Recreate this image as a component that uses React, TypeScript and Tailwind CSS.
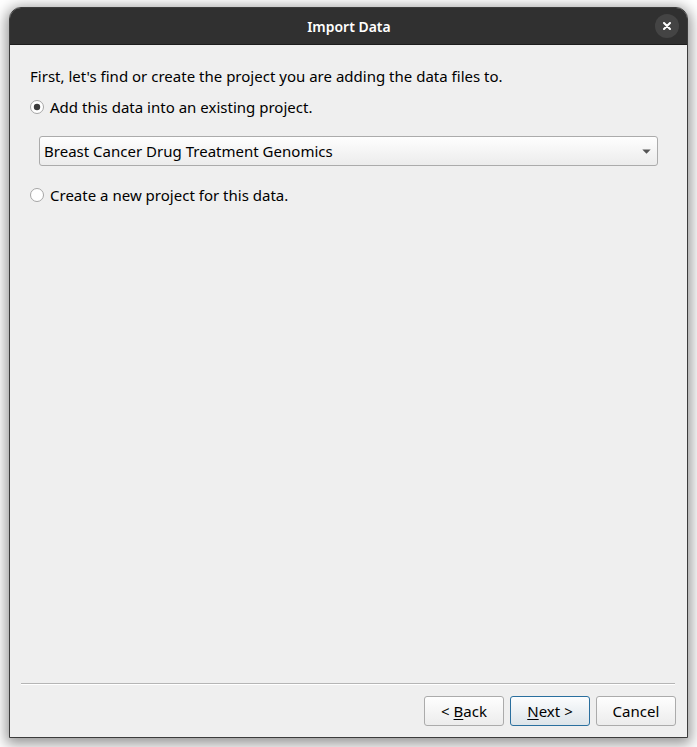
import type { ReactNode } from "react";

function Radio({ checked, children }: { checked?: boolean; children: ReactNode }) {
  return (
    <label className="flex h-[22px] items-start">
      <svg className="mr-[6px] mt-1 shrink-0" width="14" height="14" viewBox="0 0 14 14">
        <circle cx="7" cy="7" r="6.5" fill="#fff" stroke="#a5a5a5" />
        {checked && <circle cx="7" cy="7" r="3.2" fill="#3c3c3c" />}
      </svg>
      <span className="whitespace-nowrap leading-[22px]">{children}</span>
    </label>
  );
}

function Button({ primary, children }: { primary?: boolean; children: ReactNode }) {
  const look = primary
    ? "border-[#2a6f9e] from-[#fcfdfe] to-[#dce4e9]"
    : "border-[#ababab] from-[#fefefe] to-[#ececec]";
  return (
    <button
      className={`flex h-[30px] w-20 items-center justify-center whitespace-pre rounded-[3px] border bg-linear-to-b leading-none ${look}`}
    >
      {children}
    </button>
  );
}

function Mnemonic({ children }: { children: ReactNode }) {
  return <span className="underline decoration-1 underline-offset-2">{children}</span>;
}

export default function App() {
  return (
    <div className="h-[747px] w-[697px] overflow-hidden bg-white pl-[9px] pt-[7px] font-['Noto_Sans',sans-serif] text-[15px] tracking-[0.01px] text-black">
      <div className="flex h-[731px] w-[679px] flex-col overflow-hidden rounded-t-[12px] border border-[#3c3c3c] bg-[#efefef] shadow-[0_3px_14px_3px_rgba(0,0,0,0.42)]">
        <header className="grid h-[37px] shrink-0 grid-cols-[1fr_auto_1fr] items-center border-b border-[#1d1d1d] bg-[#303030]">
          <span />
          <h1 className="scale-x-[0.93] text-[15px] font-semibold text-white">Import Data</h1>
          <button className="mr-2 flex size-6 items-center justify-center justify-self-end rounded-full bg-[#444444]">
            <svg width="8" height="8" viewBox="0 0 8 8" stroke="#fff" strokeWidth="2" strokeLinecap="round">
              <path d="M1 1 7 7M7 1 1 7" />
            </svg>
          </button>
        </header>
        <main className="flex grow flex-col pl-5 pt-5">
          <p className="h-[22px] whitespace-nowrap leading-[22px]">
            First, let's find or create the project you are adding the data files to.
          </p>
          <div className="mt-[9px]">
            <Radio checked>Add this data into an existing project.</Radio>
          </div>
          <div className="ml-[9px] mt-[18px] flex h-[30px] w-[619px] items-center justify-between rounded-[3px] border border-[#ababab] bg-linear-to-b from-[#fefefe] to-[#ececec] pl-1 pr-[6px]">
            <span>Breast Cancer Drug Treatment Genomics</span>
            <svg width="9" height="5" viewBox="0 0 9 5" fill="#555">
              <path d="M.3.4h8.4L4.5 4.8Z" />
            </svg>
          </div>
          <div className="mt-[18px]">
            <Radio>Create a new project for this data.</Radio>
          </div>
        </main>
        <footer className="ml-[11px] flex h-[54px] w-[654px] shrink-0 border-t border-[#b5b5b5] pt-3 shadow-[inset_0_1px_0_#fff]">
          <div className="ml-[403px] flex gap-[6px]">
            <Button>&lt; <Mnemonic>B</Mnemonic>ack</Button>
            <Button primary><Mnemonic>N</Mnemonic>ext &gt;</Button>
            <Button>Cancel</Button>
          </div>
        </footer>
      </div>
    </div>
  );
}
